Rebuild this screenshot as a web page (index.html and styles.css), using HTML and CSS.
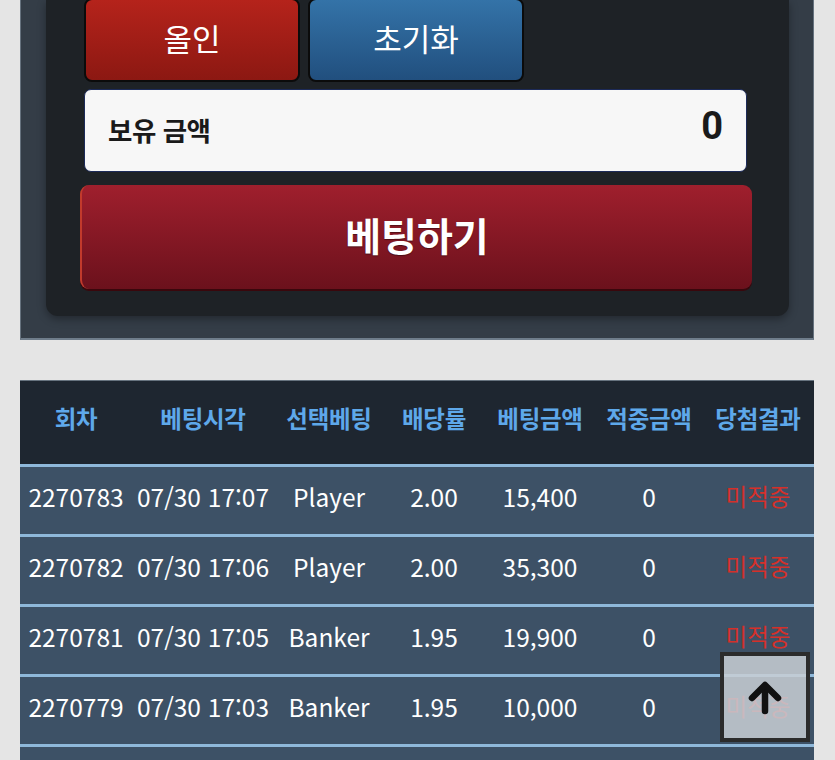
FILE: index.html
```html
<!DOCTYPE html>
<html lang="ko">
<head>
<meta charset="utf-8">
<title>베팅</title>
<link rel="stylesheet" href="styles.css">
</head>
<body>
<div class="page">
  <section class="bet-panel">
    <div class="bet-inner">
      <div class="quick-row">
        <button class="btn quick allin">올인</button>
        <button class="btn quick reset">초기화</button>
      </div>
      <div class="balance">
        <span class="balance-label">보유 금액</span>
        <strong class="balance-value">0</strong>
      </div>
      <button class="btn bet">베팅하기</button>
    </div>
  </section>

  <section class="history">
    <table class="history-table">
      <colgroup>
        <col class="c1"><col class="c2"><col class="c3"><col class="c4"><col class="c5"><col class="c6"><col class="c7">
      </colgroup>
      <thead>
        <tr>
          <th>회차</th><th>베팅시각</th><th>선택베팅</th><th>배당률</th><th>베팅금액</th><th>적중금액</th><th>당첨결과</th>
        </tr>
      </thead>
      <tbody>
        <tr><td>2270783</td><td>07/30 17:07</td><td>Player</td><td>2.00</td><td>15,400</td><td>0</td><td class="lose">미적중</td></tr>
        <tr><td>2270782</td><td>07/30 17:06</td><td>Player</td><td>2.00</td><td>35,300</td><td>0</td><td class="lose">미적중</td></tr>
        <tr><td>2270781</td><td>07/30 17:05</td><td>Banker</td><td>1.95</td><td>19,900</td><td>0</td><td class="lose">미적중</td></tr>
        <tr><td>2270779</td><td>07/30 17:03</td><td>Banker</td><td>1.95</td><td>10,000</td><td>0</td><td class="lose">미적중</td></tr>
        <tr class="more"><td></td><td></td><td></td><td></td><td></td><td></td><td></td></tr>
      </tbody>
    </table>
  </section>
</div>

<a class="to-top" href="#" aria-label="맨 위로">
  <svg width="36" height="36" viewBox="0 0 36 36" aria-hidden="true">
    <path d="M18 32 V8" stroke="#111" stroke-width="6.5" stroke-linecap="round" fill="none"/>
    <path d="M5 19 L18 6 L31 19" stroke="#111" stroke-width="6.5" stroke-linecap="round" stroke-linejoin="round" fill="none"/>
  </svg>
</a>
</body>
</html>
```

FILE: styles.css
```css
* { box-sizing: border-box; }

html, body {
  margin: 0;
  padding: 0;
  background: #e5e5e5;
  font-family: "Noto Sans CJK KR", "Noto Sans", sans-serif;
  overflow: hidden;
}

.page {
  padding: 0 21px 0 20px;
}

.bet-panel {
  background: #343d47;
  border-left: 1px solid #66727e;
  border-right: 1px solid #66727e;
  border-bottom: 2px solid #6f7d8b;
  padding: 0 24px 22px 25px;
}

.bet-inner {
  background: #1e2226;
  border-radius: 0 0 12px 12px;
  box-shadow: 0 3px 8px rgba(0, 0, 0, 0.35);
  padding: 0 37px 27px 34px;
  display: flex;
  flex-direction: column;
}

.btn {
  font-family: "Noto Sans CJK KR", "Noto Sans", sans-serif;
  color: #fff;
  cursor: pointer;
}

.quick-row {
  display: flex;
  gap: 8px;
  margin: -2px 0 0 4px;
}

.quick {
  width: 216px;
  height: 84px;
  border: 2px solid #0b0b0b;
  border-radius: 8px;
  font-size: 31px;
  font-weight: 400;
  padding: 0 0 6px 0;
}

.allin {
  background: linear-gradient(#b5231b, #8c1812);
}

.reset {
  background: linear-gradient(#3473a8, #214f7e);
}

.balance {
  margin: 7px 5px 0 4px;
  height: 83px;
  background: #f7f7f7;
  border: 1px solid #1c2a58;
  border-radius: 7px;
  display: flex;
  align-items: center;
  justify-content: space-between;
  padding: 0 23px 0 23px;
  color: #1a1a1a;
}

.balance-label {
  font-size: 26.5px;
  font-weight: 700;
  margin-top: -2px;
  letter-spacing: -0.5px;
}

.balance-value {
  font-size: 38px;
  font-weight: 700;
  font-family: "Roboto", "Noto Sans", sans-serif;
  margin-top: -10px;
}

.bet {
  margin-top: 13px;
  height: 104px;
  border: none;
  border-left: 2px solid #c23a2c;
  border-radius: 9px;
  background: linear-gradient(#9f1f2d, #6b111c);
  box-shadow: 0 2px 0 #3a070c;
  font-size: 39px;
  font-weight: 700;
  text-shadow: 0 1px 1px rgba(0, 0, 0, 0.4);
  padding: 0 0 6px 0;
}

.history {
  margin-top: 40px;
}

.history-table {
  width: 794px;
  border-collapse: collapse;
  table-layout: fixed;
}

.c1 { width: 112px; }
.c2 { width: 142px; }
.c3 { width: 110px; }
.c4 { width: 100px; }
.c5 { width: 112px; }
.c6 { width: 106px; }
.c7 { width: 112px; }

.history-table th {
  background: #1e2630;
  color: #5ea8ea;
  font-size: 23.5px;
  font-weight: 700;
  height: 85px;
  border-top: 1px solid #67737f;
  border-bottom: 3px solid #8fb8da;
  text-align: center;
  padding: 0 0 10px 0;
  white-space: nowrap;
  letter-spacing: -0.3px;
}

.history-table td {
  background: #3d5166;
  color: #fff;
  font-size: 24.5px;
  font-weight: 400;
  height: 70px;
  border-bottom: 3px solid #8fb8da;
  text-align: center;
  padding: 0 0 9px 0;
  white-space: nowrap;
}

.history-table td.lose {
  color: #d4302a;
  font-size: 23.5px;
}

.to-top {
  position: fixed;
  left: 720px;
  top: 652px;
  width: 90px;
  height: 90px;
  border: 4px solid #2b2b2b;
  background: rgba(200, 206, 212, 0.86);
  display: flex;
  align-items: center;
  justify-content: center;
}
```
